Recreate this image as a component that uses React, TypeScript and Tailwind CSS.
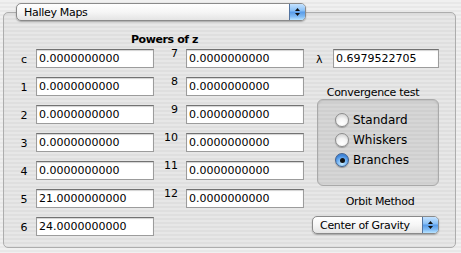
import React from "react";

const FONT = { fontFamily: '"DejaVu Sans", "Lucida Grande", sans-serif' };

function Arrows() {
  return (
    <svg width="7" height="10" viewBox="0 0 7 10">
      <path d="M3.5 1 L6 4 L1 4 Z" fill="#111" />
      <path d="M3.5 9 L6 6 L1 6 Z" fill="#111" />
    </svg>
  );
}

function Popup({ label, width }: { label: string; width: string }) {
  return (
    <div
      className={`relative z-10 flex h-[18px] ${width} items-stretch rounded-[5px] border border-[#8a8a8a] bg-gradient-to-b from-white via-[#f6f6f6] to-[#e4e4e4] shadow-[0_1px_1.5px_rgba(0,0,0,0.28)]`}
    >
      <span className="flex flex-1 items-center pl-[7px] pt-[1px] text-[11px] leading-[13px] tracking-[-0.3px] text-black">
        {label}
      </span>
      <div className="flex w-[16px] items-center justify-center rounded-r-[4px] border-l border-[#52739f] bg-[linear-gradient(to_bottom,#c4e2ff_0%,#8cc2f7_40%,#5a9de9_52%,#7fbaf4_78%,#b9e4ff_100%)]">
        <Arrows />
      </div>
    </div>
  );
}

function Field({ value, w = "w-[118px]" }: { value: string; w?: string }) {
  return (
    <div
      className={`${w} h-[19px] shrink-0 border border-[#9c9c9c] border-t-[#727272] bg-white pl-[2px] pt-[2px] text-[11px] leading-[13px] text-black shadow-[inset_0_1px_1px_rgba(0,0,0,0.18)]`}
    >
      {value}
    </div>
  );
}

function Radio({ label, checked }: { label: string; checked?: boolean }) {
  return (
    <div className="flex h-[20px] items-center">
      {checked ? (
        <div className="flex h-[14px] w-[14px] items-center justify-center rounded-full border border-[#40618f] bg-[radial-gradient(circle_at_50%_80%,#c8ecff_0%,#6fb0f2_45%,#3c83d9_75%,#5b97dc_100%)] shadow-[0_1px_1px_rgba(0,0,0,0.3)]">
          <div className="h-[5px] w-[5px] rounded-full bg-[#111]" />
        </div>
      ) : (
        <div className="h-[14px] w-[14px] rounded-full border border-[#8d8d8d] bg-[radial-gradient(circle_at_50%_80%,#ffffff_0%,#f4f4f4_45%,#d6d6d6_80%,#e8e8e8_100%)] shadow-[0_1px_1px_rgba(0,0,0,0.25)]" />
      )}
      <span className="ml-[4px] text-[12px] leading-[14px] text-black">{label}</span>
    </div>
  );
}

const left = ["c", "1", "2", "3", "4", "5", "6"];
const leftVals = [
  "0.0000000000",
  "0.0000000000",
  "0.0000000000",
  "0.0000000000",
  "0.0000000000",
  "21.0000000000",
  "24.0000000000",
];
const right = ["7", "8", "9", "10", "11", "12"];

export default function App() {
  return (
    <div
      style={FONT}
      className="flex h-[253px] w-[461px] flex-col overflow-hidden bg-[repeating-linear-gradient(to_bottom,#f0f0f0_0px,#f0f0f0_2px,#e8e8e8_2px,#e8e8e8_4px)] pl-[3px] pt-[3px]"
    >
      <div className="pl-[13px]">
        <Popup label="Halley Maps" width="w-[290px]" />
      </div>
      <div className="-mt-[9px] flex h-[236px] w-[453px] rounded-[5px] border border-[#adadad] bg-black/[0.035] shadow-[inset_0_1px_1px_rgba(0,0,0,0.06)]">
        {/* Powers of z */}
        <div className="flex w-[300px] flex-col pl-[13px] pt-[20px]">
          <div className="h-[13px] pl-[8px] text-center text-[11px] font-bold leading-[13px] tracking-[-0.4px] text-black">
            Powers of z
          </div>
          <div className="mt-[3px] flex flex-col gap-[9px]">
            {left.map((l, i) => (
              <div key={l} className="flex h-[19px]">
                <div className="flex w-[14px] items-center justify-center pt-[1px] text-[11px] leading-[13px] text-black">
                  {l}
                </div>
                <div className="ml-[5px]">
                  <Field value={leftVals[i]} />
                </div>
                {right[i] && (
                  <>
                    <div className="-mt-[2px] w-[24px] text-right text-[11px] leading-[13px] text-black">
                      {right[i]}
                    </div>
                    <div className="ml-[8px]">
                      <Field value="0.0000000000" />
                    </div>
                  </>
                )}
              </div>
            ))}
          </div>
        </div>
        {/* right column */}
        <div className="ml-[8px] flex w-[127px] flex-col pt-[36px]">
          <div className="flex h-[19px] items-center">
            <div className="w-[21px] pl-[4px] pt-[1px] text-[11px] leading-[13px] text-black">λ</div>
            <Field value="0.6979522705" w="w-[106px]" />
          </div>
          <div className="mt-[19px] pr-[5px] text-center text-[11px] leading-[12px] tracking-[-0.3px] text-black">
            Convergence test
          </div>
          <div className="ml-[5px] flex h-[87px] w-[122px] flex-col rounded-[6px] border border-[#a9a9a9] bg-black/[0.07] pl-[17px] pt-[10px] shadow-[inset_0_1px_2px_rgba(0,0,0,0.12)]">
            <Radio label="Standard" />
            <Radio label="Whiskers" />
            <Radio label="Branches" checked />
          </div>
          <div className="mt-[9px] pl-[9px] text-center text-[11px] leading-[13px] tracking-[-0.3px] text-black">
            Orbit Method
          </div>
          <div className="mt-[8px]">
            <Popup label="Center of Gravity" width="w-[127px]" />
          </div>
        </div>
      </div>
    </div>
  );
}
